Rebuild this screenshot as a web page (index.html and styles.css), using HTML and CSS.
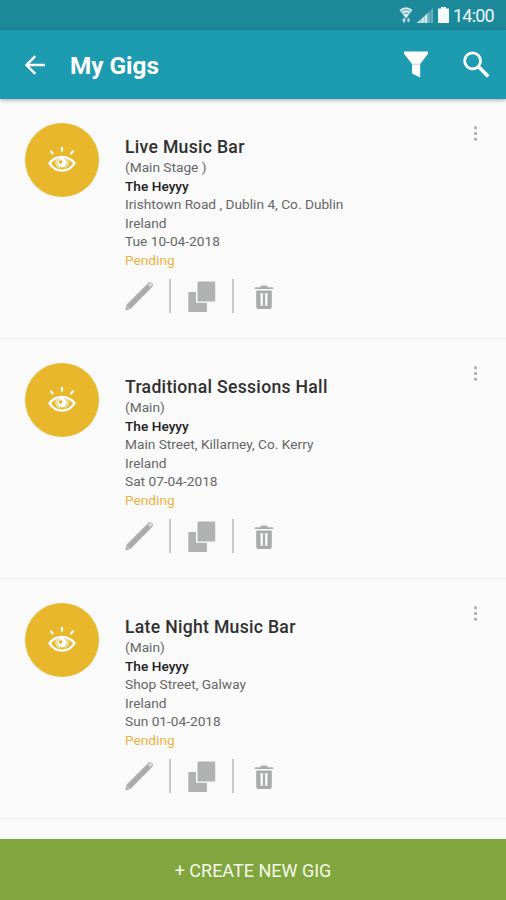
FILE: index.html
```html
<!DOCTYPE html>
<html lang="en">
<head>
    <meta charset="UTF-8">
    <meta name="viewport" content="width=device-width, initial-scale=1.0">
    <title>My Gigs</title>
    <link rel="stylesheet" href="styles.css">
</head>
<body>
    <!-- Shared icons -->
    <svg class="icon-defs">
        <symbol id="eye" viewBox="0 0 28 28">
            <g fill="none" stroke="#fff">
                <path d="M1.6 17.3C7.6 8.8 20.4 8.8 26.4 17.3C20.4 27 7.6 27 1.6 17.3Z" stroke-width="2.4"/>
                <path d="M8.6 13.4A6.6 6.6 0 0 0 11.5 22.3M19.4 13.4A6.6 6.6 0 0 1 16.5 22.3" stroke-width="1"/>
                <path d="M2.6 4.6L5 8.2M14 1V5.4M25.4 4.6L22.6 8.2" stroke-width="2.2"/>
            </g>
            <circle cx="14" cy="16.7" r="4.8" fill="#fff"/>
            <circle cx="12.5" cy="15.8" r="1.9" fill="#e8b72c"/>
        </symbol>
        <symbol id="pencil" viewBox="0 0 28 31">
            <path d="M0.3 30.5L1.3 25L23 3.2Q25 1.2 27 3Q28.8 5.2 27 7.2L5.4 29Z" fill="#aaacab"/>
            <path d="M23 4.6L25.7 7.5" stroke="#fafafa" stroke-width="0.7"/>
            <circle cx="25.6" cy="4.6" r="1.3" fill="#f0f0f0"/>
            <path d="M1.8 26.2L4.5 28.8" stroke="#e6e6e6" stroke-width="0.8"/>
        </symbol>
        <symbol id="copy" viewBox="0 0 28 32">
            <path d="M0.3 12H8V22.7H18.9V32H0.3Z" fill="#b0b2b1"/>
            <rect x="9.5" y="1.5" width="17.7" height="20" fill="#b0b2b1"/>
        </symbol>
        <symbol id="trash" viewBox="0 0 20 26">
            <path d="M1 3.2H6L7.5 1.4H12.5L14 3.2H19V5H1Z" fill="#a9abaa"/>
            <path d="M2.2 6.4H17.8V22.5Q17.8 25 15.4 25H4.6Q2.2 25 2.2 22.5Z" fill="#a9abaa"/>
            <path d="M7.7 9V21.8M12.3 9V21.8" stroke="#fafafa" stroke-width="2.4"/>
        </symbol>
        <symbol id="dots" viewBox="0 0 6 16">
            <g fill="#a6a6a6">
                <circle cx="3.5" cy="2.7" r="1.5"/>
                <circle cx="3.5" cy="8.5" r="1.5"/>
                <circle cx="3.5" cy="14.2" r="1.5"/>
            </g>
        </symbol>
    </svg>

    <div class="status-bar">
        <svg class="wifi" viewBox="0 0 14 18">
            <path d="M0.5 4Q7 -1.5 13.5 4L7 12.5Z" fill="#d9edf0"/>
            <path d="M2.4 5.4Q7 2 11.6 5.4M4.2 7.8Q7 6 9.8 7.8" fill="none" stroke="#1c8a9b" stroke-width="0.8"/>
            <path d="M3 14.2L5 11.6L7 14.2H6V16.5H4V14.2ZM7.6 14L9.4 16.6L11.2 14H10.2V12H8.6V14Z" fill="#b9dde2"/>
        </svg>
        <svg class="signal" viewBox="0 0 16 15">
            <path d="M0 15L16 0V15Z" fill="#69b0bb"/>
            <path d="M0 15L11 4.7V15Z" fill="#d9edf0"/>
            <path d="M4 9V15M7.2 6V15M10.5 3V15M13.5 1V15" stroke="#1c8a9b" stroke-width="0.5"/>
        </svg>
        <svg class="battery" viewBox="0 0 11 16">
            <path d="M3 0H8V1.5H11V16H0V1.5H3Z" fill="#f5fcfc"/>
        </svg>
        <span class="time">14:00</span>
    </div>

    <div class="header">
        <svg class="back" viewBox="0 0 20 20">
            <path d="M19.8 10H2M10.3 1.2L1.5 10L10.3 18.8" fill="none" stroke="#fff" stroke-width="2.4"/>
        </svg>
        <h1 class="page-title">My Gigs</h1>
        <svg class="filter" viewBox="0 0 24 27">
            <path d="M0 0.5H24V2.8L16.2 13H8L0 2.8Z" fill="#fff"/>
            <path d="M8 13H16.2V26.5L8 22.6Z" fill="#fff"/>
            <path d="M8 13.2H16.2" stroke="#a5d6de" stroke-width="1"/>
        </svg>
        <svg class="search" viewBox="0 0 27 27">
            <circle cx="9.6" cy="9.8" r="8" fill="none" stroke="#fff" stroke-width="2.8"/>
            <path d="M15.3 15.5L25.3 25.5" stroke="#fff" stroke-width="3.6"/>
        </svg>
    </div>

    <div class="gig-list">
        <div class="gig">
            <div class="avatar"><svg class="eye"><use href="#eye"/></svg></div>
            <div class="details">
                <h2 class="venue">Live Music Bar</h2>
                <p>(Main Stage )</p>
                <p class="band">The Heyyy</p>
                <p>Irishtown Road , Dublin 4, Co. Dublin</p>
                <p>Ireland</p>
                <p>Tue 10-04-2018</p>
                <p class="pending">Pending</p>
                <div class="actions">
                    <svg class="pencil"><use href="#pencil"/></svg>
                    <span class="divider"></span>
                    <svg class="copy"><use href="#copy"/></svg>
                    <span class="divider"></span>
                    <svg class="trash"><use href="#trash"/></svg>
                </div>
            </div>
            <svg class="dots"><use href="#dots"/></svg>
        </div>

        <div class="gig">
            <div class="avatar"><svg class="eye"><use href="#eye"/></svg></div>
            <div class="details">
                <h2 class="venue">Traditional Sessions Hall</h2>
                <p>(Main)</p>
                <p class="band">The Heyyy</p>
                <p>Main Street, Killarney, Co. Kerry</p>
                <p>Ireland</p>
                <p>Sat 07-04-2018</p>
                <p class="pending">Pending</p>
                <div class="actions">
                    <svg class="pencil"><use href="#pencil"/></svg>
                    <span class="divider"></span>
                    <svg class="copy"><use href="#copy"/></svg>
                    <span class="divider"></span>
                    <svg class="trash"><use href="#trash"/></svg>
                </div>
            </div>
            <svg class="dots"><use href="#dots"/></svg>
        </div>

        <div class="gig">
            <div class="avatar"><svg class="eye"><use href="#eye"/></svg></div>
            <div class="details">
                <h2 class="venue">Late Night Music Bar</h2>
                <p>(Main)</p>
                <p class="band">The Heyyy</p>
                <p>Shop Street, Galway</p>
                <p>Ireland</p>
                <p>Sun 01-04-2018</p>
                <p class="pending">Pending</p>
                <div class="actions">
                    <svg class="pencil"><use href="#pencil"/></svg>
                    <span class="divider"></span>
                    <svg class="copy"><use href="#copy"/></svg>
                    <span class="divider"></span>
                    <svg class="trash"><use href="#trash"/></svg>
                </div>
            </div>
            <svg class="dots"><use href="#dots"/></svg>
        </div>
    </div>

    <div class="create">+ CREATE NEW GIG</div>
</body>
</html>
```

FILE: styles.css
```css
* {
    box-sizing: border-box;
    margin: 0;
    padding: 0;
}

body {
    display: flex;
    flex-direction: column;
    height: 900px;
    overflow: hidden;
    font-family: Roboto, sans-serif;
    background-color: #fafafa;
}

svg {
    display: block;
    flex-shrink: 0;
}

.icon-defs {
    display: none;
}

.status-bar {
    display: flex;
    justify-content: flex-end;
    align-items: center;
    flex-shrink: 0;
    height: 30px;
    padding-right: 12px;
    background-color: #1c8a9b;
}

.wifi {
    width: 14px;
    height: 18px;
    margin-right: 4px;
}

.signal {
    width: 16px;
    height: 15px;
    margin-right: 5px;
}

.battery {
    width: 11px;
    height: 16px;
    margin-right: 4px;
}

.time {
    font-size: 18px;
    line-height: 30px;
    width: 41px;
    padding-top: 1px;
    letter-spacing: -0.8px;
    color: #eef8f9;
}

.header {
    display: flex;
    align-items: center;
    flex-shrink: 0;
    height: 69px;
    padding: 0 16px 0 25px;
    background-color: #1c9bb1;
    box-shadow: 0 1px 4px rgba(0, 0, 0, 0.35);
    z-index: 1;
}

.back {
    width: 20px;
    height: 20px;
    margin-right: 25px;
}

.page-title {
    flex: 1;
    font-size: 24.3px;
    font-weight: 700;
    line-height: 30px;
    padding-top: 3px;
    color: #fff;
}

.filter {
    width: 24px;
    height: 27px;
    margin-right: 35px;
}

.search {
    width: 27px;
    height: 27px;
}

.gig-list {
    flex: 1;
}

.gig {
    display: flex;
    height: 240px;
    padding: 24px 28px 0 25px;
    border-bottom: 1px solid #ebebeb;
}

.avatar {
    display: flex;
    justify-content: center;
    align-items: center;
    width: 74px;
    height: 74px;
    margin-right: 26px;
    border-radius: 50%;
    background-color: #e8b72c;
}

.eye {
    width: 28px;
    height: 28px;
}

.details {
    flex: 1;
    padding-top: 13px;
    font-size: 13.7px;
    line-height: 18.6px;
    color: #666;
}

.venue {
    font-size: 17.6px;
    font-weight: 500;
    line-height: 22px;
    letter-spacing: 0.3px;
    color: #303030;
}

.band {
    font-weight: 500;
    color: #222;
}

.pending {
    color: #ecb043;
}

.actions {
    display: flex;
    align-items: center;
    height: 34px;
    margin-top: 9px;
}

.divider {
    width: 2px;
    height: 34px;
    background-color: #c9c9c9;
}

.pencil {
    width: 28px;
    height: 31px;
    margin-right: 16px;
}

.copy {
    width: 28px;
    height: 32px;
    margin: 0 16px 0 17px;
}

.trash {
    width: 20px;
    height: 26px;
    margin: 2px 0 0 20px;
}

.dots {
    width: 6px;
    height: 16px;
    margin-top: 2px;
}

.create {
    height: 61px;
    flex-shrink: 0;
    font-size: 18px;
    line-height: 63px;
    text-align: center;
    color: #f4f9ea;
    background-color: #82a63f;
}
```
